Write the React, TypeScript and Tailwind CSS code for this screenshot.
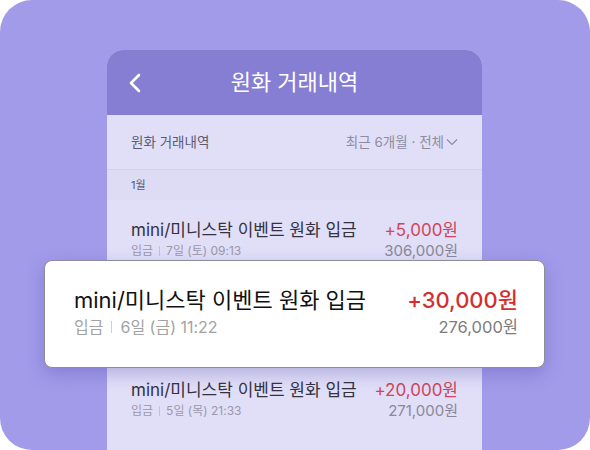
import React from 'react';

const rows = [
  { title: 'mini/미니스탁 이벤트 원화 입금', amount: '+5,000원', type: '입금', date: '7일 (토) 09:13', balance: '306,000원' },
  { title: 'mini/미니스탁 이벤트 원화 입금', amount: '+30,000원', type: '입금', date: '6일 (금) 11:22', balance: '276,000원' },
  { title: 'mini/미니스탁 이벤트 원화 입금', amount: '+20,000원', type: '입금', date: '5일 (목) 21:33', balance: '271,000원' },
];

function Row({ row }: { row: (typeof rows)[number] }) {
  return (
    <div className="h-[80px] px-6 pt-[19px]">
      <div className="flex items-center justify-between h-[24px]">
        <span className="text-[17px] text-[#34323f]">{row.title}</span>
        <span className="text-[17px] text-[#d3435a]">{row.amount}</span>
      </div>
      <div className="flex items-center justify-between h-[16px]">
        <span className="flex items-center text-[12px] text-[#9a98ab]">
          입금
          <span className="w-px h-[10px] bg-[#c4c2d8] mx-[6px]" />
          {row.date}
        </span>
        <span className="text-[15px] text-[#8a8898]">{row.balance}</span>
      </div>
    </div>
  );
}

export default function App() {
  const featured = rows[1];

  return (
    <div className="w-[590px] h-[450px] bg-white font-['Inter','Noto_Sans_CJK_KR',sans-serif]">
      <div className="relative w-[590px] h-[450px] rounded-[32px] bg-[#a29bea] overflow-hidden pt-[50px] pl-[107px]">
        {/* Phone */}
        <div className="w-[375px] h-[400px] rounded-t-[16px] overflow-hidden bg-[#e1dff8]">
          <div className="relative h-[65px] bg-[#857ed3] flex items-center justify-center">
            <svg className="absolute left-[20px] top-[23px]" width="16" height="20" viewBox="0 0 16 20" fill="none">
              <polyline points="12,2 4,10 12,18" stroke="white" strokeWidth="2.6" strokeLinecap="round" strokeLinejoin="round" />
            </svg>
            <span className="text-[22px] text-white">원화 거래내역</span>
          </div>

          <div className="h-[55px] px-6 flex items-center justify-between border-b border-[#d3d0ef]">
            <span className="text-[13.5px] text-[#5c5a6c]">원화 거래내역</span>
            <span className="flex items-center gap-[2px] text-[13.5px] text-[#8e8ca0]">
              최근 6개월 · 전체
              <svg width="12" height="8" viewBox="0 0 12 8" fill="none">
                <polyline points="1,1.5 6,6.5 11,1.5" stroke="#8e8ca0" strokeWidth="1.2" />
              </svg>
            </span>
          </div>

          <div className="h-[30px] px-6 flex items-center bg-[#dedcf5]">
            <span className="text-[11px] text-[#5c5a6c]">1월</span>
          </div>

          <Row row={rows[0]} />
          {/* second row sits under the featured card */}
          <div className="h-[80px]" />
          <Row row={rows[2]} />
        </div>

        {/* Featured transaction card */}
        <div className="absolute left-[44px] top-[260px] w-[501px] h-[108px] bg-white rounded-[8px] border border-[#8d8d96] shadow-[0_6px_18px_rgba(70,60,160,0.3)] pl-[29px] pr-[26px] pt-[23px]">
          <div className="flex items-center justify-between h-[32px]">
            <span className="text-[22px] text-[#111]">{featured.title}</span>
            <span className="text-[22px] font-medium text-[#d42f2f]">{featured.amount}</span>
          </div>
          <div className="flex items-center justify-between h-[22px]">
            <span className="flex items-center text-[16px] text-[#a3a3a3]">
              입금
              <span className="w-px h-[12px] bg-[#cfcfcf] mx-[8px]" />
              {featured.date}
            </span>
            <span className="text-[16.5px] text-[#7c7c7c]">{featured.balance}</span>
          </div>
        </div>
      </div>
    </div>
  );
}
